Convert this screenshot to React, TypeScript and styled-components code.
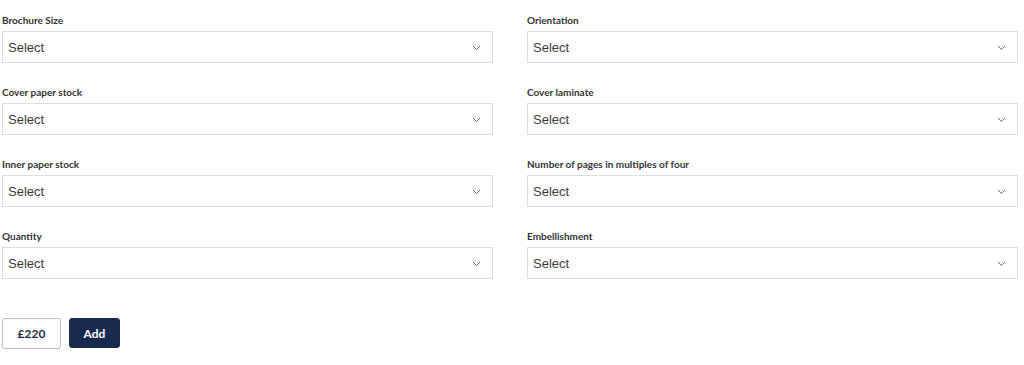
import React from "react";
import styled, { createGlobalStyle } from "styled-components";

const Global = createGlobalStyle`
  html, body { margin: 0; padding: 0; background: #fff; }
  body { font-family: "Liberation Sans", Arial, sans-serif; }
`;

const Page = styled.div`
  padding: 13px 6px 0 2px;
`;

const Grid = styled.div`
  display: grid;
  grid-template-columns: 1fr 1fr;
  column-gap: 34px;
  row-gap: 22px;
`;

const Field = styled.div`
  display: flex;
  flex-direction: column;
  gap: 4px;
`;

const Label = styled.label`
  font-family: "Lato", "Open Sans", sans-serif;
  font-weight: 700;
  font-size: 10px;
  line-height: 14px;
  color: #333;
`;

const SelectBox = styled.div`
  height: 32px;
  box-sizing: border-box;
  border: 1px solid #dedede;
  display: flex;
  align-items: center;
  justify-content: space-between;
  padding: 0 11px 0 5px;
  font-family: "Liberation Sans", Arial, sans-serif;
  font-size: 13px;
  color: #3c3c3c;
  background: #fff;
`;

const Chevron = styled.svg`
  width: 9px;
  height: 6px;
  margin-top: 1px;
`;

const Actions = styled.div`
  display: flex;
  align-items: flex-start;
  gap: 8px;
  margin-top: 39px;
`;

const Button = styled.button<{ $primary?: boolean }>`
  font-family: "Lato", "Open Sans", sans-serif;
  font-weight: 700;
  font-size: 12px;
  border-radius: 3px;
  box-sizing: border-box;
  cursor: pointer;
  padding: 0;
  height: ${(p) => (p.$primary ? "30px" : "31px")};
  width: ${(p) => (p.$primary ? "51px" : "59px")};
  border: 1px solid ${(p) => (p.$primary ? "#172b4f" : "#bdbdbd")};
  background: ${(p) => (p.$primary ? "#172b4f" : "#fff")};
  color: ${(p) => (p.$primary ? "#fff" : "#1d2a44")};
`;

const fields = [
  "Brochure Size",
  "Orientation",
  "Cover paper stock",
  "Cover laminate",
  "Inner paper stock",
  "Number of pages in multiples of four",
  "Quantity",
  "Embellishment",
];

export default function App() {
  return (
    <Page>
      <Global />
      <Grid>
        {fields.map((f) => (
          <Field key={f}>
            <Label>{f}</Label>
            <SelectBox>
              <span>Select</span>
              <Chevron viewBox="0 0 9 6">
                <path d="M1 1 L4.5 4.5 L8 1" fill="none" stroke="#666" strokeWidth="1" />
              </Chevron>
            </SelectBox>
          </Field>
        ))}
      </Grid>
      <Actions>
        <Button>£220</Button>
        <Button $primary>Add</Button>
      </Actions>
    </Page>
  );
}
